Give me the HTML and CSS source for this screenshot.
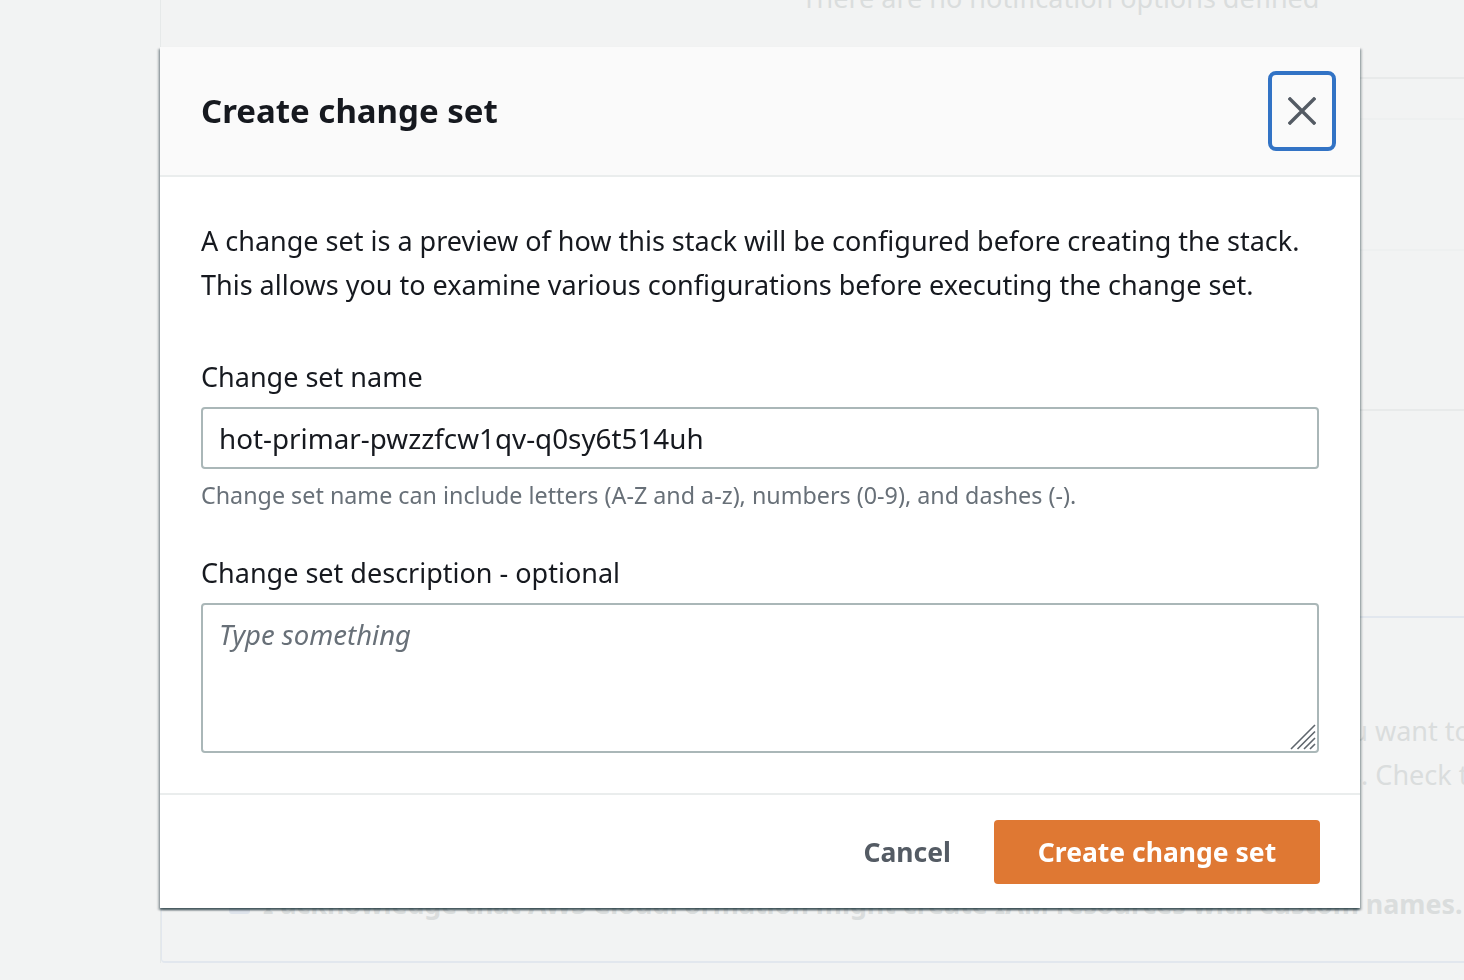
FILE: index.html
```html
<!DOCTYPE html>
<html lang="en">
<head>
<meta charset="utf-8">
<title>Create change set</title>
<link rel="stylesheet" href="styles.css">
</head>
<body>
<div class="page">
  <div class="bg-content">
    <div class="bg-row bg-empty"><span class="bg-empty-text">There are no notification options defined</span></div>
    <div class="bg-row bg-r2"></div>
    <div class="bg-row bg-r3"></div>
    <div class="bg-row bg-r4"></div>
    <div class="bg-row bg-r5"></div>
    <div class="bg-panel">
      <p class="bg-text bg-line1">The following resource(s) require capabilities: [AWS::IAM::Role]. Please confirm that you want to</p>
      <p class="bg-text bg-line2">continue. This template contains Identity and Access Management (IAM) resources. Check that the</p>
      <div class="bg-check"><span class="bg-box"></span><span class="bg-check-text">I acknowledge that AWS CloudFormation might create IAM resources with custom names.</span></div>
    </div>
  </div>
</div>

<div class="overlay">
  <div class="modal" role="dialog" aria-labelledby="modal-title">
    <div class="modal-header">
      <h2 id="modal-title" class="modal-title">Create change set</h2>
      <button class="close-btn" aria-label="Close">
        <svg width="28" height="28" viewBox="0 0 28 28" aria-hidden="true">
          <path d="M2 2 L26 26 M26 2 L2 26" stroke="#545b64" stroke-width="3.4" stroke-linecap="square" fill="none"/>
        </svg>
      </button>
    </div>
    <div class="modal-body">
      <p class="intro">A change set is a preview of how this stack will be configured before creating the stack.<br>This allows you to examine various configurations before executing the change set.</p>
      <div class="field">
        <label class="field-label" for="cs-name">Change set name</label>
        <input id="cs-name" class="text-input" type="text" value="hot-primar-pwzzfcw1qv-q0sy6t514uh">
        <div class="field-hint">Change set name can include letters (A-Z and a-z), numbers (0-9), and dashes (-).</div>
      </div>
      <div class="field field-gap">
        <label class="field-label" for="cs-desc">Change set description - optional</label>
        <div class="textarea-wrap">
          <textarea id="cs-desc" class="text-area" placeholder="Type something"></textarea>
          <svg class="resize-grip" width="26" height="26" viewBox="0 0 26 26" aria-hidden="true">
            <path d="M25 1 L1 25 M25 7.5 L7.5 25 M25 14 L14 25 M25 20 L20 25" stroke="#5f666d" stroke-width="1.6" fill="none"/>
          </svg>
        </div>
      </div>
    </div>
    <div class="modal-footer">
      <button class="btn-link">Cancel</button>
      <button class="btn-primary">Create change set</button>
    </div>
  </div>
</div>
</body>
</html>
```

FILE: styles.css
```css
* { box-sizing: border-box; }

html, body {
  margin: 0;
  padding: 0;
  width: 1464px;
  height: 980px;
  overflow: hidden;
  background: #f2f3f3;
  font-family: "Noto Sans", "Open Sans", sans-serif;
  color: #16191f;
}

/* ---------- background page ---------- */
.page {
  padding-left: 160px;
  height: 980px;
  overflow: hidden;
}

.bg-content {
  width: 1800px;
  border-left: 1px solid #e6e9e9;
  color: #dadddd;
}

.bg-row {
  border-bottom: 2px solid #e8eaea;
}

.bg-empty {
  height: 79px;
  text-align: center;
  overflow: hidden;
}

.bg-empty-text {
  display: block;
  margin-top: -24px;
  font-size: 27px;
  line-height: 44px;
}

.bg-r2 { height: 41px; border-bottom-color: #eef0f0; }
.bg-r3 { height: 131px; border-bottom-color: #eef0f0; }
.bg-r4 { height: 160px; border-bottom-color: #e8eaea; }
.bg-r5 { height: 207px; border-bottom: 2px solid #e2e7ee; }

.bg-panel {
  height: 345px;
  border-bottom: 2px solid #e2e7ee;
  border-left: 1px solid #e2e7ee;
  border-radius: 0 0 0 4px;
  padding: 91px 0 0 90px;
}

.bg-text {
  margin: 0;
  white-space: nowrap;
  font-size: 27px;
  line-height: 44px;
  color: #dadddd;
}

.bg-line1 { padding-left: 13px; }
.bg-line2 { padding-left: 63px; }

.bg-check {
  display: flex;
  align-items: center;
  gap: 13px;
  margin-top: 88px;
  margin-left: -23px;
  white-space: nowrap;
}

.bg-box {
  width: 21px;
  height: 21px;
  border-radius: 3px;
  background: #dfe4ec;
  flex: none;
}

.bg-check-text {
  font-size: 26.8px;
  font-weight: 700;
  color: #dadddd;
}

/* ---------- modal ---------- */
.overlay {
  position: fixed;
  inset: 0;
}

.modal {
  width: 1200px;
  margin: 47px 0 0 160px;
  background: #ffffff;
  box-shadow: 0 2px 2px rgba(0, 28, 36, 0.55),
              2px 2px 2px rgba(0, 28, 36, 0.2),
              -2px 2px 2px rgba(0, 28, 36, 0.25);
}

.modal-header {
  display: flex;
  align-items: center;
  justify-content: space-between;
  height: 130px;
  padding: 0 24px 0 41px;
  background: #fafafa;
  border-bottom: 2px solid #eaeded;
}

.modal-title {
  margin: 0;
  font-size: 33px;
  font-weight: 700;
  line-height: 44px;
  color: #16191f;
}

.close-btn {
  display: flex;
  align-items: center;
  justify-content: center;
  width: 68px;
  height: 80px;
  padding: 0;
  background: transparent;
  border: 4px solid #3273c5;
  border-radius: 8px;
}

.modal-body {
  padding: 42px 41px 40px;
}

.intro {
  margin: 0 0 48px;
  font-size: 27px;
  line-height: 44px;
  color: #16191f;
}

.field-label {
  display: block;
  font-size: 27px;
  line-height: 44px;
  margin-bottom: 8px;
  color: #16191f;
}

.text-input {
  display: block;
  width: 100%;
  height: 62px;
  padding: 0 16px;
  border: 2px solid #aab7b8;
  border-radius: 4px;
  font-family: inherit;
  font-size: 27.8px;
  color: #16191f;
  background: #fff;
  outline: none;
}

.field-hint {
  margin-top: 10px;
  font-size: 23.3px;
  line-height: 32px;
  color: #687078;
}

.field-gap {
  margin-top: 40px;
}

.textarea-wrap {
  position: relative;
}

.text-area {
  display: block;
  width: 100%;
  height: 150px;
  padding: 12px 16px;
  border: 2px solid #aab7b8;
  border-radius: 4px;
  font-family: inherit;
  font-size: 27.5px;
  line-height: 36px;
  color: #16191f;
  background: #fff;
  resize: none;
  outline: none;
}

.text-area::placeholder {
  font-style: italic;
  color: #687078;
  opacity: 1;
}

.resize-grip {
  position: absolute;
  right: 3px;
  bottom: 3px;
}

.modal-footer {
  display: flex;
  align-items: center;
  justify-content: flex-end;
  gap: 43px;
  padding: 25px 40px 24px;
  border-top: 2px solid #eaeded;
}

.btn-link {
  padding: 0;
  border: none;
  background: transparent;
  font-family: inherit;
  font-size: 26.5px;
  font-weight: 700;
  color: #545b64;
  line-height: 64px;
}

.btn-primary {
  width: 326px;
  height: 64px;
  padding: 0;
  border: none;
  border-radius: 4px;
  background: #df7833;
  font-family: inherit;
  font-size: 26.5px;
  font-weight: 700;
  color: #ffffff;
}
```
